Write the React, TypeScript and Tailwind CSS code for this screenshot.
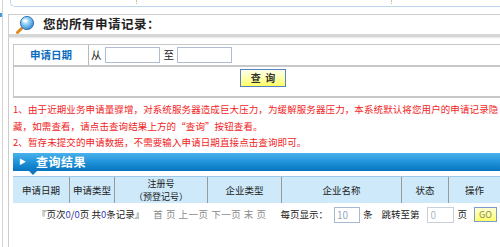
import React from 'react';

const SearchIcon: React.FC = () => (
  <svg width="19" height="19" viewBox="0 0 19 19">
    <defs>
      <radialGradient id="lens" cx="0.4" cy="0.35" r="0.7">
        <stop offset="0" stopColor="#e8f6ff" />
        <stop offset="0.5" stopColor="#7cc4f0" />
        <stop offset="1" stopColor="#2f7fc6" />
      </radialGradient>
    </defs>
    <line x1="5.5" y1="13.5" x2="1.5" y2="17.5" stroke="#e08a1e" strokeWidth="3" strokeLinecap="round" />
    <circle cx="11" cy="8" r="6.6" fill="url(#lens)" stroke="#3a78b8" strokeWidth="1" />
    <ellipse cx="9" cy="5.8" rx="2.6" ry="1.6" fill="#ffffff" opacity="0.8" />
  </svg>
);

const columns = [
  { w: 'w-[57px]', label: '申请日期' },
  { w: 'w-[45px]', label: '申请类型' },
  { w: 'w-[93px]', label: 'reg' },
  { w: 'w-[74px]', label: '企业类型' },
  { w: 'w-[120px]', label: '企业名称' },
  { w: 'w-[47px]', label: '状态' },
  { w: 'flex-1', label: '操作' },
];

export default function App() {
  return (
    <div className="w-[500px] h-[247px] overflow-hidden bg-white flex font-['Noto_Sans_CJK_SC','Liberation_Sans',sans-serif] text-[#222]">
      {/* left frame strip */}
      <div className="w-[3px] border-r border-[#d4d4d4] flex flex-col">
        <div className="mt-[13px] h-[4px] bg-[#3b9de0]" />
      </div>

      <div className="flex-1 flex flex-col pl-[5px]">
        {/* top box remnant */}
        <div className="ml-[2px] h-[7px] border-l border-b border-[#bcd8f0] rounded-bl-[5px] flex">
          <div className="ml-[125px] border-l border-dotted border-[#d8b890] h-[4px]" />
          <div className="ml-[254px] border-l border-dotted border-[#d8b890] h-[4px]" />
        </div>

        {/* panel */}
        <div className="mt-[7px] flex-1 border-l border-t border-[#cccccc] flex flex-col">
          <div className="h-[22px] flex items-center pl-[7px] border-b-[3px] border-[#d6d6d6] shadow-[0_1px_1px_#e8e8e8]">
            <SearchIcon />
            <span className="ml-[8px] text-[12.5px] font-bold leading-none tracking-[0.5px]">您的所有申请记录：</span>
          </div>

          <div className="pl-[4px] mt-[7px]">
            {/* form table */}
            <div className="border-l border-t border-b-2 border-[#c8c8c8]">
              <div className="h-[22px] flex border-b-2 border-[#c8c8c8]">
                <div className="w-[75px] border-r border-[#b8b8b8] flex items-center justify-center text-[10.5px] font-bold text-[#0b6dc0]">
                  申请日期
                </div>
                <div className="flex items-center text-[10.5px] pl-[2px]">
                  <span>从</span>
                  <div className="ml-[3px] w-[55px] h-[16px] border border-[#b0bcd0]" />
                  <span className="ml-[4px]">至</span>
                  <div className="ml-[3px] w-[55px] h-[16px] border border-[#b0bcd0]" />
                </div>
              </div>
              <div className="h-[29px] pt-[2px] pl-[226px]">
                <div className="w-[46px] h-[18px] border border-[#5a80c4] bg-gradient-to-b from-[#ffffe8] to-[#ffff5c] flex items-center justify-center text-[10px] font-bold text-[#333] leading-none">
                  查&nbsp;&nbsp;询
                </div>
              </div>
            </div>

            {/* notes */}
            <div className="mt-[3px] text-[9.5px] leading-[16.5px] text-[#f01c24] whitespace-nowrap tracking-[0.1px]">
              <div>1、由于近期业务申请量骤增，对系统服务器造成巨大压力，为缓解服务器压力，本系统默认将您用户的申请记录隐</div>
              <div>藏，如需查看，请点击查询结果上方的“查询”按钮查看。</div>
              <div>2、暂存未提交的申请数据，不需要输入申请日期直接点击查询即可。</div>
            </div>

            {/* result bar */}
            <div className="mt-[2px] h-[18px] bg-gradient-to-b from-[#4ab2ec] via-[#1f93da] to-[#0675be] flex items-center">
              <span className="ml-[6px] text-white text-[7px] leading-none">▶</span>
              <span className="ml-[10px] text-white text-[12px] font-bold leading-none tracking-[0.5px]">查询结果</span>
            </div>
            <div className="h-[5px] pl-[16px]">
              <div className="w-0 h-0 border-l-[4px] border-r-[4px] border-t-[4px] border-l-transparent border-r-transparent border-t-[#0a78c0]" />
            </div>

            {/* result table header */}
            <div className="h-[27px] flex bg-[#cde9fa] border-t border-[#9ec9e8] text-[9.5px] leading-[12px]">
              {columns.map((c, i) => (
                <div
                  key={i}
                  className={`${c.w} flex flex-col items-center justify-center ${i < columns.length - 1 ? 'border-r border-[#9a9a9a]' : ''}`}
                >
                  {c.label === 'reg' ? (
                    <>
                      <span className="text-[9px] leading-[13px]">注册号</span>
                      <span className="text-[9px] leading-[13px]">（预登记号）</span>
                    </>
                  ) : (
                    <span>{c.label}</span>
                  )}
                </div>
              ))}
            </div>

            {/* pagination */}
            <div className="mt-[4px] h-[16px] flex items-center text-[9.5px] whitespace-nowrap">
              <span className="ml-[24px]">
                『页次<span className="text-[#3c3cc8]">0</span>/<span className="text-[#3c3cc8]">0</span>页 共<span className="text-[#3c3cc8]">0</span>条记录』
              </span>
              <span className="ml-[9px] text-[#8a8a8a] tracking-[0.5px]">首&nbsp;页&nbsp;上一页&nbsp;下一页&nbsp;末&nbsp;页</span>
              <span className="ml-[14px]">每页显示：</span>
              <div className="ml-[6px] w-[26px] h-[16px] border border-[#a8b8d4] text-[#9aa8c0] text-[10px] leading-[14px] pl-[2px]">10</div>
              <span className="ml-[3px]">条</span>
              <span className="ml-[9px]">跳转至第</span>
              <div className="ml-[8px] w-[27px] h-[16px] border border-[#c8d0dc] text-[#b0b8c8] text-[10px] leading-[14px] pl-[2px]">0</div>
              <span className="ml-[3px]">页</span>
              <div className="ml-[7px] w-[23px] h-[15px] border border-[#7a9ad0] bg-gradient-to-b from-[#ffffd0] to-[#ffff60] text-[9px] leading-[13px] text-center text-[#8a8a60]">GO</div>
            </div>
          </div>
        </div>
      </div>
    </div>
  );
}
